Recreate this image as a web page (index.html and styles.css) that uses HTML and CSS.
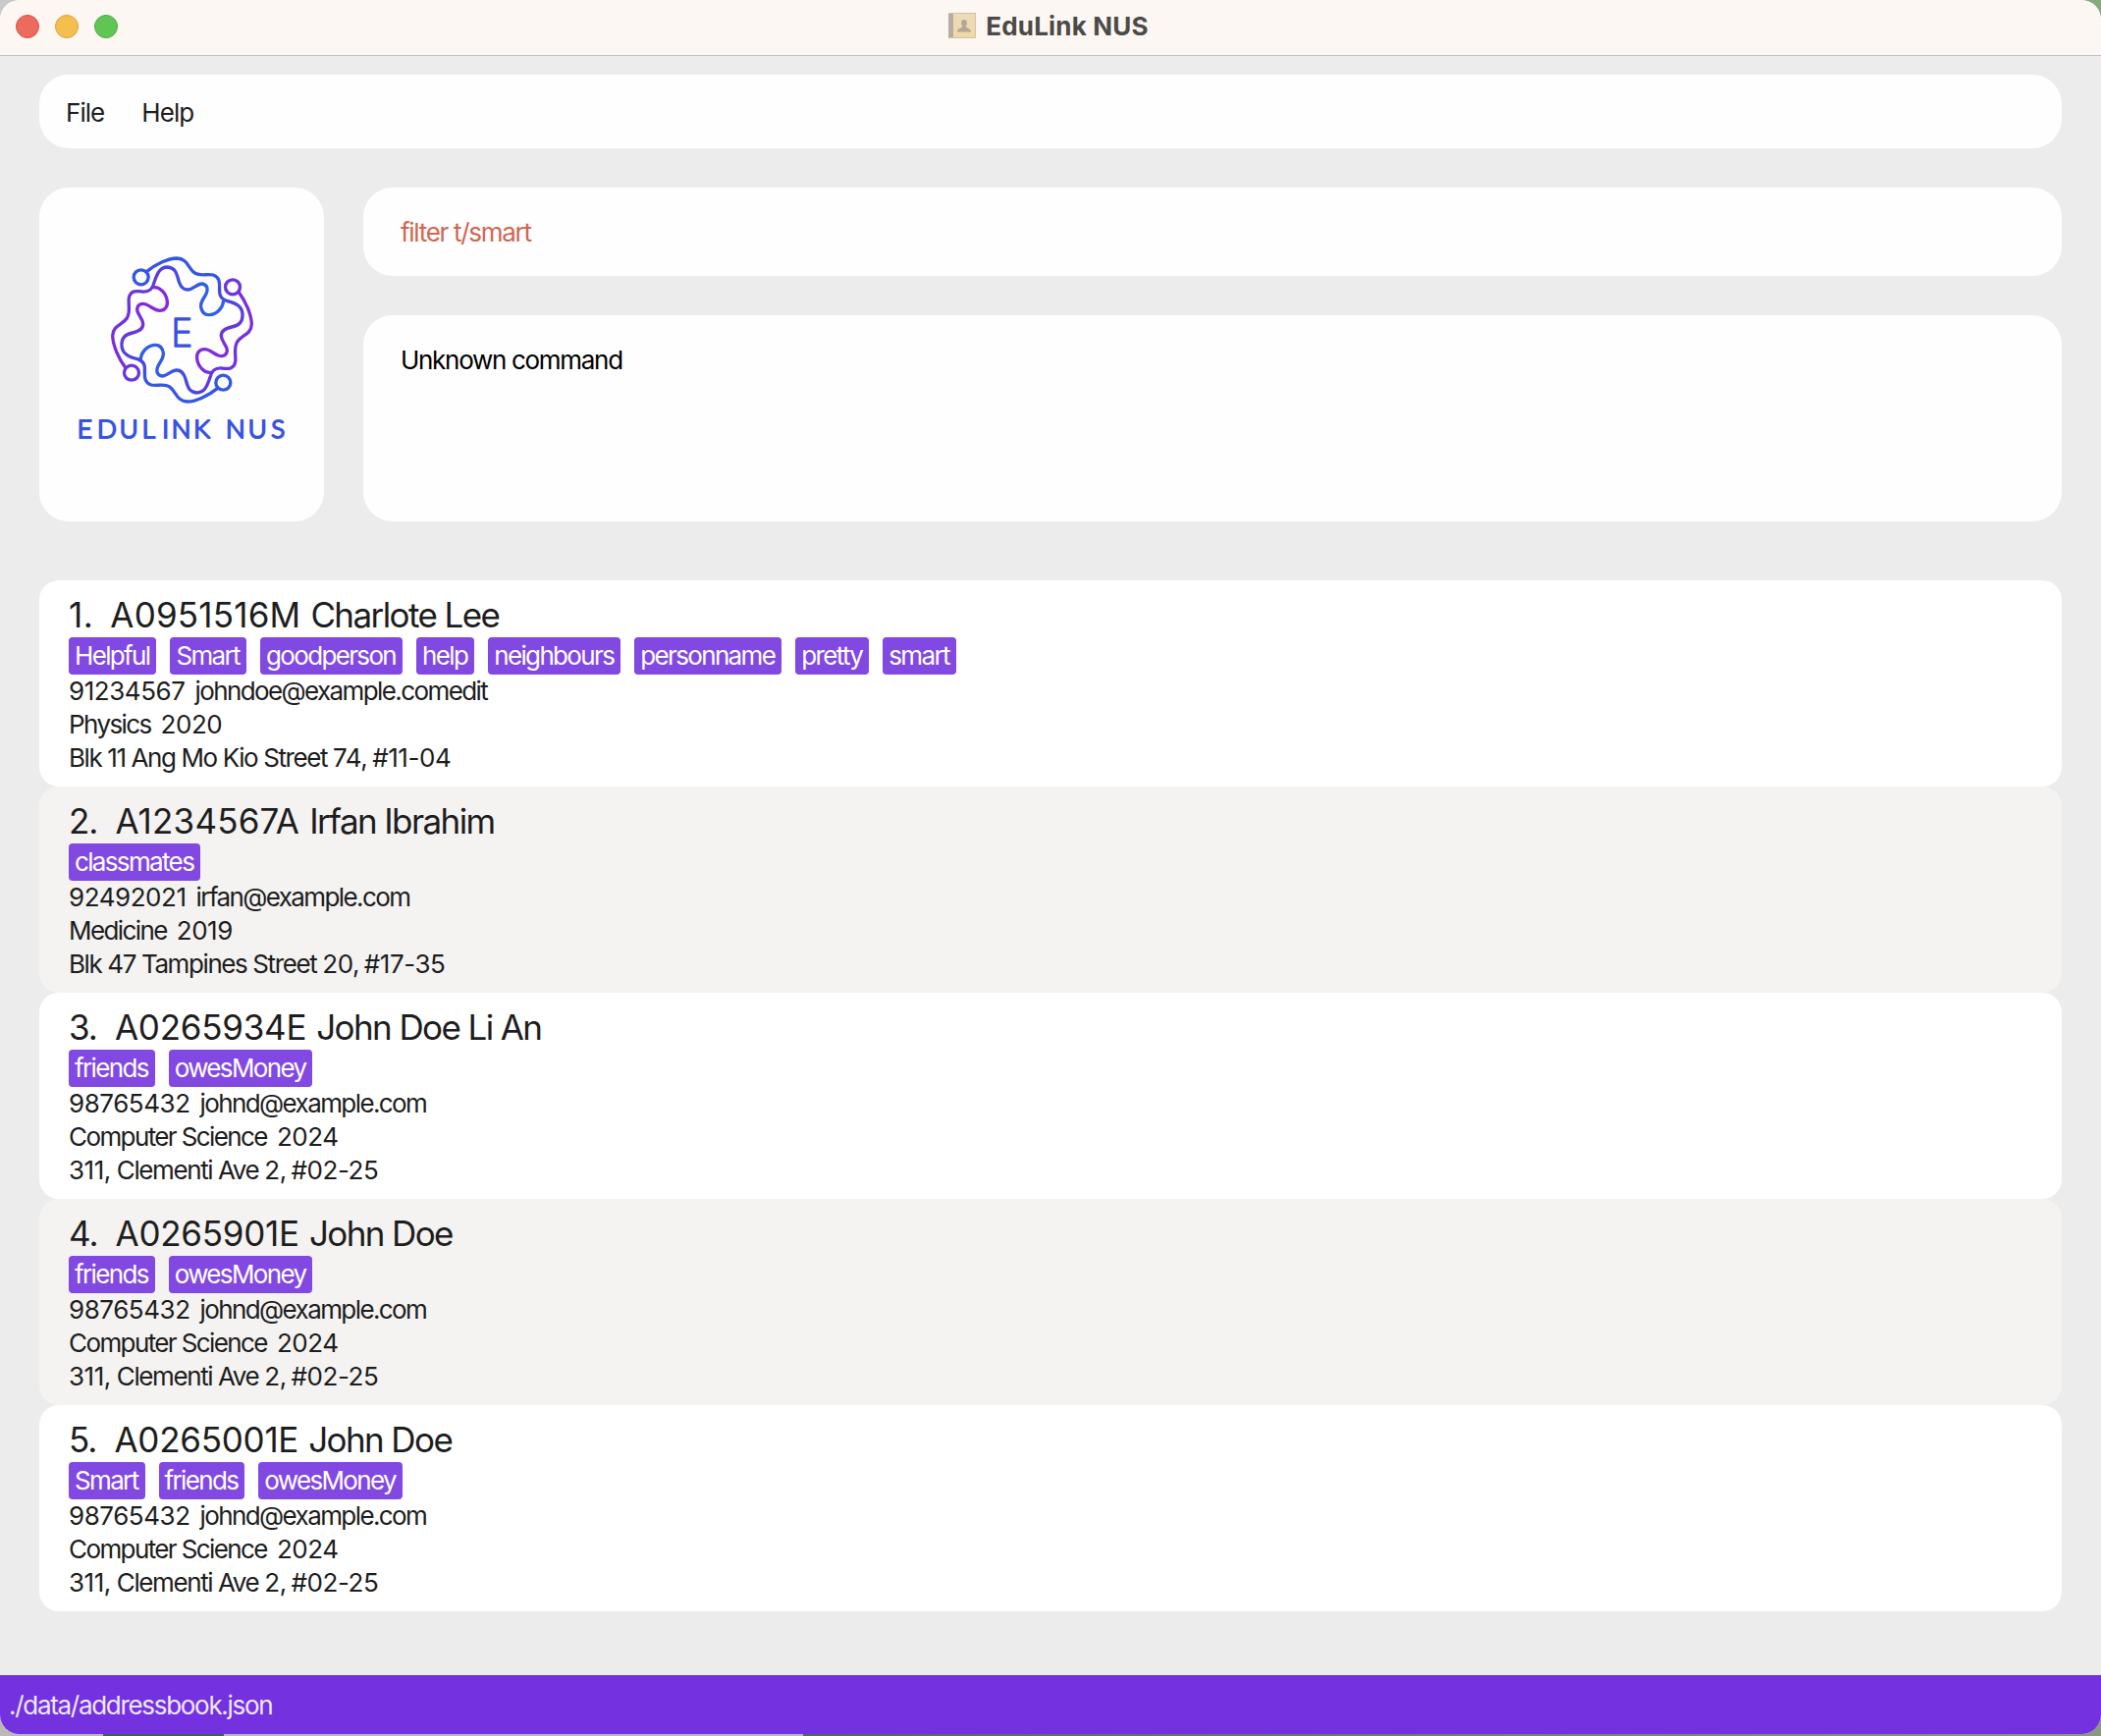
FILE: index.html
```html
<!DOCTYPE html>
<html lang="en">
<head>
<meta charset="utf-8">
<title>EduLink NUS</title>
<link rel="stylesheet" href="styles.css">
</head>
<body>
<div class="window">
  <header class="titlebar">
    <div class="lights"><span class="light red"></span><span class="light amber"></span><span class="light green"></span></div>
    <div class="title">
      <svg class="book" viewBox="0 0 28 26" width="28" height="26">
        <defs><linearGradient id="cover" x1="0" y1="0" x2="0" y2="1"><stop offset="0" stop-color="#eadcbc"/><stop offset="1" stop-color="#f0d8a4"/></linearGradient></defs>
        <rect x="0" y="0" width="28" height="26" rx="1.5" fill="url(#cover)"/>
        <rect x="0" y="0" width="5" height="26" rx="1" fill="#b9aca4"/>
        <path d="M0 .5H27.5M27.5 0V25.5M1 25.5H27.5" stroke="#d2c2a3" fill="none"/>
        <path d="M16 7c2 0 3 1.300 3 3.500 0 1.500-.700 2.700-1.300 3.300 0 2 5.300 1.800 5.300 5.700H9c0-3.900 5.300-3.700 5.300-5.700-.600-.600-1.300-1.800-1.300-3.300C13 8.300 14 7 16 7z" fill="#b5a695"/>
      </svg>
      <span>EduLink NUS</span>
    </div>
  </header>
  <nav class="menu card"><span>File</span><span>Help</span></nav>
  <section class="top">
    <div class="logo card">
      <svg viewBox="30 33 870 1020" width="290" height="340">
        <defs>
          <linearGradient id="ga" gradientUnits="userSpaceOnUse" x1="0" y1="310" x2="0" y2="540"><stop offset="0" stop-color="#3457e2"/><stop offset=".3" stop-color="#4a45de"/><stop offset="1" stop-color="#822bdc"/></linearGradient>
          <linearGradient id="gb" gradientUnits="userSpaceOnUse" x1="390" y1="0" x2="680" y2="0"><stop offset="0" stop-color="#3060e4"/><stop offset=".25" stop-color="#3f4ee0"/><stop offset=".5" stop-color="#5a3ddd"/><stop offset="1" stop-color="#7b2ddb"/></linearGradient>
          <g id="half" fill="none" stroke-width="10" stroke-linecap="round" stroke-linejoin="round">
            <circle cx="341" cy="307" r="22.500" stroke="#3457e2"/>
            <path stroke="url(#ga)" d="M358 290C385 268 424 249 450 249C482 250 484 276 501 291C519 307 542 295 561 300C588 309 579 335 581 354C582 370 591 375 603 379C627 385 650 394 651 420C652 445 640 454 618 459C595 464 585 472 586 487C588 506 605 516 604 532C602 546 591 551 577 546C561 540 551 527 535 527C518 527 510 540 512 556C515 580 535 600 553 598"/>
            <circle cx="621" cy="337" r="22.500" stroke="#6a35df"/>
            <path stroke="url(#gb)" d="M640 353C660 380 678 420 679 450C678 482 648 484 635 504C623 524 632 548 629 566C624 590 604 587 588 585C563 583 556 596 552 613C543 640 535 660 511 660C485 658 483 638 476 615C470 597 461 590 448 591C431 593 420 610 405 609C388 606 387 592 393 578C400 564 411 555 409 538C406 520 395 513 382 514C360 516 342 535 340 557"/>
          </g>
        </defs>
        <use href="#half"/>
        <use href="#half" transform="rotate(180 466.500 468)"/>
        <text class="mono" x="433" y="520" textLength="66" lengthAdjust="spacingAndGlyphs">E</text>
        <text class="word" x="146 207 275 344 406 434 502 600 668 739" y="799">EDULINKNUS</text>
      </svg>
    </div>
    <div class="console">
      <div class="command card">filter t/smart</div>
      <div class="result card">Unknown command</div>
    </div>
  </section>
  <main class="list">
    <article class="row">
      <h2><span class="index">1.</span><span class="sid wide">A0951516M</span><span class="name">Charlote Lee</span></h2>
      <div class="tags"><span>Helpful</span><span>Smart</span><span>goodperson</span><span>help</span><span>neighbours</span><span>personname</span><span>pretty</span><span>smart</span></div>
      <p><span class="num">91234567</span><span>johndoe@example.comedit</span></p>
      <p><span>Physics</span><span class="num">2020</span></p>
      <p class="address">Blk 11 Ang Mo Kio Street <span class="num">74, #11-04</span></p>
    </article>
    <article class="row alt">
      <h2><span>2.</span><span class="sid wide">A1234567A</span><span class="name">Irfan Ibrahim</span></h2>
      <div class="tags"><span>classmates</span></div>
      <p><span class="num">92492021</span><span>irfan@example.com</span></p>
      <p><span>Medicine</span><span class="num">2019</span></p>
      <p class="address">Blk 47 Tampines Street <span class="num">20, #17-35</span></p>
    </article>
    <article class="row">
      <h2><span>3.</span><span class="sid">A0265934E</span><span class="name">John Doe Li An</span></h2>
      <div class="tags"><span>friends</span><span>owesMoney</span></div>
      <p><span class="num">98765432</span><span>johnd@example.com</span></p>
      <p><span>Computer Science</span><span class="num">2024</span></p>
      <p class="address"><span class="num">311,</span> Clementi Ave <span class="num">2, #02-25</span></p>
    </article>
    <article class="row alt">
      <h2><span>4.</span><span class="sid">A0265901E</span><span class="name">John Doe</span></h2>
      <div class="tags"><span>friends</span><span>owesMoney</span></div>
      <p><span class="num">98765432</span><span>johnd@example.com</span></p>
      <p><span>Computer Science</span><span class="num">2024</span></p>
      <p class="address"><span class="num">311,</span> Clementi Ave <span class="num">2, #02-25</span></p>
    </article>
    <article class="row">
      <h2><span>5.</span><span class="sid">A0265001E</span><span class="name">John Doe</span></h2>
      <div class="tags"><span>Smart</span><span>friends</span><span>owesMoney</span></div>
      <p><span class="num">98765432</span><span>johnd@example.com</span></p>
      <p><span>Computer Science</span><span class="num">2024</span></p>
      <p class="address"><span class="num">311,</span> Clementi Ave <span class="num">2, #02-25</span></p>
    </article>
  </main>
  <footer class="status">./data/addressbook.json</footer>
</div>
</body>
</html>
```
FILE: styles.css
```css
* { box-sizing: border-box; }
html, body { height: 100%; }
body {
  margin: 0;
  overflow: hidden;
  font-family: Inter, "Liberation Sans", sans-serif;
  font-size: 26px;
  letter-spacing: -1.3px;
  color: #1d1d1d;
  background:
    linear-gradient(90deg, #b9b9b7 105px, #3f5f4f 105px 228px, #b9b9b7 228px 818px, #4f6b50 818px, #8b9a7e) 0 100% / 100% 60px no-repeat,
    linear-gradient(90deg, #c9c9c9 50%, #86a77f 50%);
}
.window {
  height: 1766px;
  display: flex;
  flex-direction: column;
  background: #ececec;
  border-radius: 20px;
  overflow: hidden;
}
.titlebar {
  height: 57px;
  flex: none;
  display: grid;
  grid-template-columns: 1fr auto 1fr;
  align-items: center;
  padding: 0 16px 2px;
  background: #fcf7f2;
  border-bottom: 1px solid #c4c2c0;
}
.lights { display: flex; gap: 16px; }
.light { width: 24px; height: 24px; border-radius: 50%; border: 1px solid; }
.red { background: #ec6a5e; border-color: #d5544a; }
.amber { background: #f4bf4f; border-color: #d8a13c; }
.green { background: #61c554; border-color: #4dac3f; }
.title {
  display: flex;
  align-items: center;
  gap: 10px;
  padding: 0 4px 2px 0;
  font-weight: 700;
  font-size: 26px;
  letter-spacing: 0.2px;
  color: #4c4a48;
}
.card { background: #fefefe; border-radius: 30px; }
.menu {
  flex: none;
  height: 75px;
  margin: 19px 40px 0;
  padding: 2px 27px 0;
  display: flex;
  align-items: center;
  gap: 38px;
  letter-spacing: -0.95px;
}
.top {
  display: grid;
  grid-template-columns: 290px 1fr;
  gap: 40px;
  height: 340px;
  margin: 40px 40px 0;
}
.logo svg { display: block; }
.mono { font: 200 118px Inter, sans-serif; fill: #3b50e0; stroke: #3b50e0; stroke-width: 5; stroke-linejoin: round; letter-spacing: 0; }
.word { font: 300 78px Lato, sans-serif; fill: #3953e1; stroke: #3953e1; stroke-width: 6; stroke-linejoin: round; letter-spacing: 0; }
.console { display: grid; grid-template-rows: 90px 1fr; gap: 40px; }
.command { padding: 2px 38px 0; line-height: 88px; color: #d06651; }
.result { padding: 26px 38px; line-height: 40px; color: #000; }
.list { margin: 60px 40px 0; }
.row {
  height: 210px;
  padding: 12px 30px;
  background: #fff;
  border-radius: 20px;
}
.alt { background: #f4f3f2; }
.row h2 {
  display: flex;
  margin: 0;
  font-size: 35px;
  line-height: 46px;
  font-weight: 400;
  letter-spacing: -1px;
}
.index { letter-spacing: 0.5px; }
.sid { margin-left: 18px; letter-spacing: -0.25px; }
.index + .sid { margin-left: 17px; }
.sid.wide { letter-spacing: 0.2px; }
.name { margin-left: 10px; letter-spacing: -1.6px; }
.tags { display: flex; gap: 14px; letter-spacing: -1.65px; }
.tags span {
  height: 38px;
  padding: 0 7px 0 6px;
  line-height: 38px;
  border-radius: 4px;
  background: #8248e2;
  color: #fff;
}
.row p { display: flex; gap: 10px; margin: 0; line-height: 34px; letter-spacing: -1.6px; }
.row .address { display: block; letter-spacing: -1.4px; }
.num, .row .num { letter-spacing: -0.45px; }
.address .num { word-spacing: -2px; }
.status {
  flex: none;
  height: 60px;
  margin-top: auto;
  padding: 1px 9px 0;
  line-height: 60px;
  background: #7331df;
  color: #efe8fb;
}
```
